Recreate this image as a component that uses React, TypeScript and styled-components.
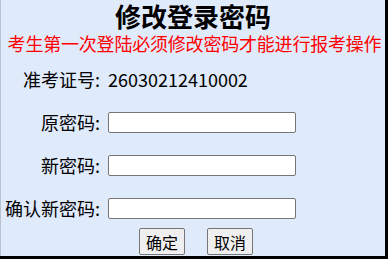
import React from "react"
import styled, { createGlobalStyle } from "styled-components"

const GlobalStyle = createGlobalStyle`
  html, body {
    margin: 0;
    padding: 0;
    background: #000;
  }
  body {
    font-family: "Noto Sans CJK SC", "Noto Sans", sans-serif;
  }
`

const Panel = styled.div`
  width: 384px;
  height: 256px;
  background: #dfeafb;
  border-left: 1px solid #b9c3d0;
  display: flex;
  flex-direction: column;
  align-items: center;
  overflow: hidden;
`

const Title = styled.h1`
  margin: 0;
  font-size: 26px;
  line-height: 32px;
  font-weight: 700;
  color: #000;
`

const Notice = styled.div`
  font-size: 18px;
  line-height: 22px;
  color: #f00;
  white-space: nowrap;
  letter-spacing: -0.2px;
  padding-left: 3px;
`

const Form = styled.div`
  align-self: stretch;
  display: grid;
  grid-template-columns: 99px 1fr;
  grid-auto-rows: 22px;
  column-gap: 8px;
  row-gap: 21px;
  margin-top: 14px;
  align-items: center;
`

const Label = styled.span`
  font-size: 18px;
  line-height: 22px;
  color: #000;
  text-align: right;
  white-space: nowrap;
`

const Value = styled.span`
  font-size: 18px;
  line-height: 22px;
  color: #000;
`

const Field = styled.input`
  box-sizing: border-box;
  width: 188px;
  height: 21px;
  border: 1px solid #767676;
  border-radius: 2px;
  background: #fff;
  padding: 0 4px;
  margin: 0;
`

const Buttons = styled.div`
  display: flex;
  gap: 22px;
  margin-top: 9px;
  padding-left: 6px;
`

const Button = styled.button`
  box-sizing: border-box;
  width: 46px;
  height: 27px;
  border: 1px solid #767676;
  border-radius: 2px;
  background: #efefef;
  font-family: "Noto Sans CJK SC", sans-serif;
  font-size: 16px;
  line-height: 1;
  color: #000;
  padding: 0;
`

export default function App() {
  return (
    <>
      <GlobalStyle />
      <Panel>
        <Title>修改登录密码</Title>
        <Notice>考生第一次登陆必须修改密码才能进行报考操作</Notice>
        <Form>
          <Label>准考证号:</Label>
          <Value>26030212410002</Value>
          <Label>原密码:</Label>
          <Field type="password" />
          <Label>新密码:</Label>
          <Field type="password" />
          <Label>确认新密码:</Label>
          <Field type="password" />
        </Form>
        <Buttons>
          <Button>确定</Button>
          <Button>取消</Button>
        </Buttons>
      </Panel>
    </>
  )
}
